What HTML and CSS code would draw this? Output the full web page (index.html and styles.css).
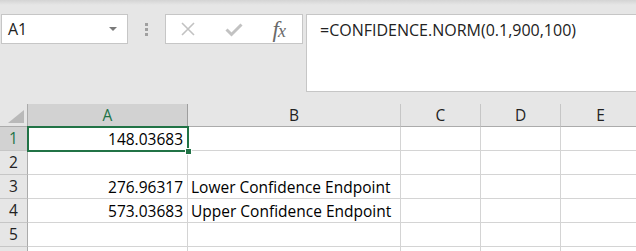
FILE: index.html
```html
<!DOCTYPE html>
<html>
<head>
<meta charset="utf-8">
<link rel="stylesheet" href="styles.css">
</head>
<body>
<div class="app">
  <div class="topband"></div>
  <div class="fbar">
    <div class="namebox">
      <span class="nb-text">A1</span>
      <svg class="nb-arrow" width="8" height="5" viewBox="0 0 8 5"><path d="M0 0 H8 L4 4 Z" fill="#7a7a7a"/></svg>
    </div>
    <div class="grip"><span></span><span></span><span></span></div>
    <div class="fnbox">
      <svg class="ico x" width="16" height="16" viewBox="0 0 16 16"><path d="M2 2 L14 14 M14 2 L2 14" stroke="#c2c2c2" stroke-width="1.6" fill="none"/></svg>
      <svg class="ico chk" width="18" height="14" viewBox="0 0 18 14"><path d="M1.5 6.5 L6.5 11.5 L16.5 1.5" stroke="#c2c2c2" stroke-width="3" fill="none"/></svg>
      <span class="fx">f<span class="fxx">x</span></span>
    </div>
    <div class="formula">=CONFIDENCE.NORM(0.1,900,100)</div>
  </div>
  <div class="sheet">
    <div class="grid">
      <div class="corner"><svg width="16" height="13" viewBox="0 0 16 13"><path d="M16 0 V13 H0 Z" fill="#b9b9b9"/></svg></div>
      <div class="ch sel">A</div>
      <div class="ch">B</div>
      <div class="ch">C</div>
      <div class="ch">D</div>
      <div class="ch last">E</div>

      <div class="rh sel">1</div>
      <div class="c num">148.03683</div>
      <div class="c"></div><div class="c"></div><div class="c"></div><div class="c last"></div>

      <div class="rh">2</div>
      <div class="c"></div><div class="c"></div><div class="c"></div><div class="c"></div><div class="c last"></div>

      <div class="rh">3</div>
      <div class="c num">276.96317</div>
      <div class="c txt">Lower Confidence Endpoint</div>
      <div class="c"></div><div class="c"></div><div class="c last"></div>

      <div class="rh">4</div>
      <div class="c num">573.03683</div>
      <div class="c txt">Upper Confidence Endpoint</div>
      <div class="c"></div><div class="c"></div><div class="c last"></div>

      <div class="rh">5</div>
      <div class="c"></div><div class="c"></div><div class="c"></div><div class="c"></div><div class="c last"></div>

      <div class="rh"></div>
      <div class="c"></div><div class="c"></div><div class="c"></div><div class="c"></div><div class="c last"></div>
    </div>
    <div class="selbox"><span class="handle"></span></div>
  </div>
</div>
</body>
</html>
```

FILE: styles.css
```css
html, body {
  margin: 0;
  padding: 0;
}
body {
  width: 636px;
  height: 251px;
  overflow: hidden;
  background: #e6e6e6;
  font-family: "Open Sans", "Liberation Sans", sans-serif;
}
.app {
  width: 636px;
  height: 251px;
  overflow: hidden;
  background: #e6e6e6;
}
.topband {
  height: 5px;
  background: linear-gradient(#d4d4d4, #e6e6e6);
}
.fbar {
  display: flex;
  align-items: flex-start;
  padding-top: 9px;
  padding-left: 1px;
  height: 90px;
}
.namebox {
  box-sizing: border-box;
  width: 127px;
  height: 30px;
  background: #fff;
  border: 1px solid #c6c6c6;
  display: flex;
  align-items: center;
  justify-content: space-between;
  padding: 0 10px 0 6px;
}
.nb-text {
  font-family: "Open Sans", sans-serif;
  font-size: 16px;
  color: #222;
}
.nb-arrow {
  margin-top: 1px;
}
.grip {
  width: 37px;
  height: 30px;
  display: flex;
  flex-direction: column;
  align-items: center;
  justify-content: center;
  gap: 2px;
}
.grip span {
  width: 3px;
  height: 3px;
  background: #a0a0a0;
}
.fnbox {
  box-sizing: border-box;
  width: 138px;
  height: 30px;
  background: #fff;
  border: 1px solid #c6c6c6;
  display: flex;
  align-items: center;
  padding: 0 17px 0 14px;
}
.ico {
  display: block;
}
.ico.chk {
  margin-left: 29px;
  margin-top: 1px;
}
.fx {
  margin-left: auto;
  font-family: "Liberation Serif", "DejaVu Serif", serif;
  font-style: italic;
  font-size: 23px;
  color: #6a6a6a;
  letter-spacing: -1px;
  line-height: 1;
}
.fxx {
  font-size: 18px;
}
.formula {
  box-sizing: border-box;
  flex: 1;
  margin-left: 3px;
  height: 78px;
  background: #fff;
  border: 1px solid #c6c6c6;
  border-right: none;
  padding: 4px 0 0 13px;
  font-family: "Open Sans", sans-serif;
  font-size: 16px;
  color: #222;
  white-space: nowrap;
}
.sheet {
  position: relative;
}
.grid {
  display: grid;
  grid-template-columns: 28px 160px 213px 80px 80px 80px;
  grid-template-rows: 23px repeat(6, 24px);
}
.corner {
  box-sizing: border-box;
  background: #e6e6e6;
  border-right: 1px solid #ababab;
  border-bottom: 1px solid #ababab;
  display: flex;
  align-items: flex-end;
  justify-content: flex-end;
  padding: 0 3px 3px 0;
}
.corner svg { display: block; }
.ch {
  box-sizing: border-box;
  background: #e6e6e6;
  border-right: 1px solid #c6c6c6;
  border-bottom: 1px solid #ababab;
  text-align: center;
  font-family: "Open Sans", sans-serif;
  font-size: 15.5px;
  line-height: 22px;
  color: #222;
}
.ch.sel {
  background: #d2d2d2;
  color: #217346;
  border-right-color: #9e9e9e;
}
.rh {
  box-sizing: border-box;
  background: #e6e6e6;
  border-right: 1px solid #ababab;
  border-bottom: 1px solid #c6c6c6;
  text-align: center;
  font-family: "Open Sans", sans-serif;
  font-size: 15.5px;
  line-height: 23px;
  color: #222;
}
.rh.sel {
  background: #d2d2d2;
  color: #217346;
}
.c {
  box-sizing: border-box;
  background: #fff;
  border-right: 1px solid #d4d4d4;
  border-bottom: 1px solid #d4d4d4;
  font-family: "Open Sans", sans-serif;
  font-size: 15.5px;
  line-height: 24px;
  color: #000;
  white-space: nowrap;
  overflow: visible;
}
.c.num {
  text-align: right;
  padding-right: 4px;
}
.c.txt {
  padding-left: 3px;
}
.selbox {
  position: absolute;
  left: 27px;
  top: 22px;
  width: 158px;
  height: 22px;
  border: 2px solid #217346;
}
.handle {
  position: absolute;
  right: -5px;
  bottom: -5px;
  width: 5px;
  height: 5px;
  background: #217346;
  border: 1px solid #fff;
}
```
